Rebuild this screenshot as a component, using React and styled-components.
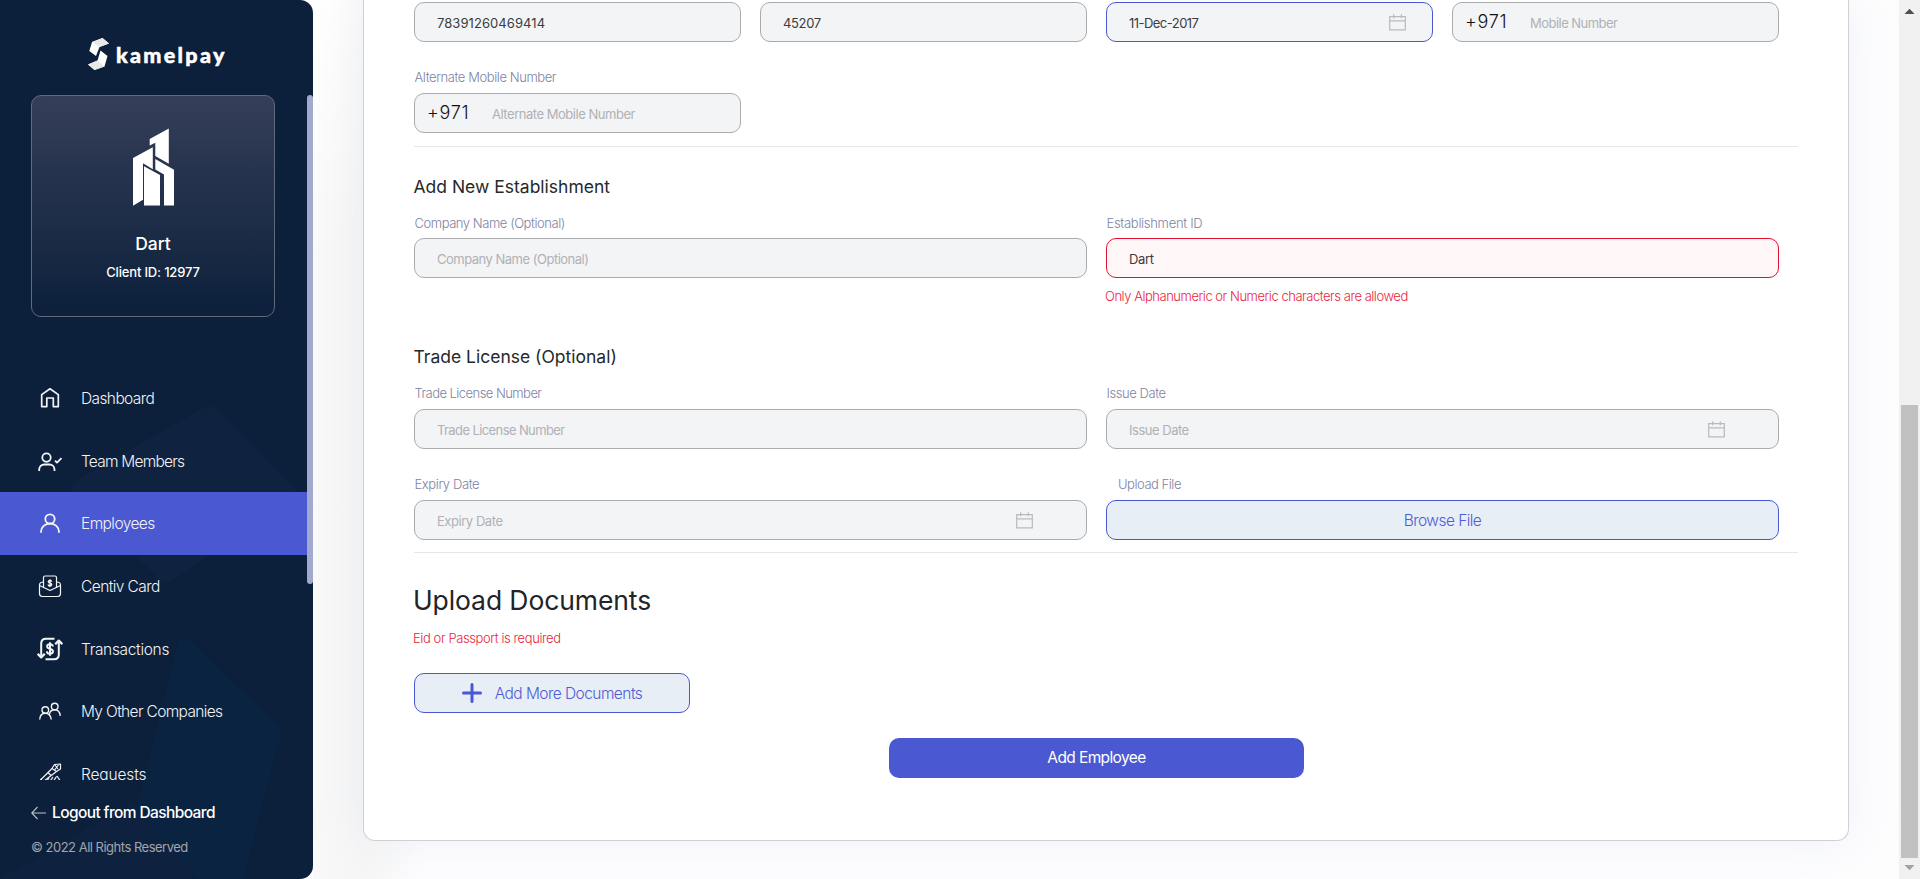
import React from "react";
import styled, { createGlobalStyle } from "styled-components";

const GlobalStyle = createGlobalStyle`
  * { box-sizing: border-box; }
  body {
    margin: 0;
    overflow: hidden;
    font-family: Inter, "Liberation Sans", sans-serif;
    background: #fcfdfd;
  }
`;

const Page = styled.div`
  display: flex;
  height: 879px;
  overflow: hidden;
`;

/* ---------- Sidebar ---------- */

const Sidebar = styled.aside`
  position: relative;
  z-index: 1;
  flex: none;
  width: 313px;
  height: 879px;
  background: #0c203b;
  border-radius: 0 13px 13px 0;
  overflow: hidden;
  display: flex;
  flex-direction: column;
  color: #fff;
`;

const Backdrop = styled.svg`
  position: absolute;
  inset: 0;
  z-index: -1;
`;

const Brand = styled.div`
  height: 95px;
  padding: 37px 0 0 87px;
  display: flex;
  align-items: flex-start;
  gap: 6px;
`;

const BrandName = styled.span`
  font: 900 21.5px/36px Lato, "Open Sans", sans-serif;
  letter-spacing: ${(p) => p.$ls}px;
  -webkit-text-stroke: 0.5px #fff;
`;

const ScrollArea = styled.div`
  display: flex;
  height: 685px;
  overflow: hidden;
`;

const ScrollContent = styled.div`
  width: 307px;
`;

const ScrollThumb = styled.div`
  width: 6px;
  height: 489px;
  border-radius: 3px;
  background: #a3a8ce;
`;

const ClientCard = styled.div`
  width: 244px;
  height: 222px;
  margin-left: 31px;
  border: 1px solid #5f6a7d;
  border-radius: 10px;
  background: linear-gradient(#353e58, #0c203b);
  display: flex;
  flex-direction: column;
  align-items: center;
  padding-top: 32px;
`;

const ClientName = styled.div`
  margin-top: 25px;
  font-size: 17.5px;
  font-weight: 500;
  line-height: 26px;
`;

const ClientId = styled.div`
  margin-top: 5px;
  font-size: 13px;
  font-weight: 500;
  line-height: 20px;
  letter-spacing: -0.17px;
`;

const Menu = styled.nav`
  margin-top: 50px;
`;

const MenuItem = styled.div`
  height: 62.6px;
  display: flex;
  align-items: center;
  padding-left: 37px;
  gap: 18px;
  background: ${(p) => (p.$active ? "#4a58d1" : "transparent")};
`;

const MenuLabel = styled.span`
  padding-top: 2px;
  font-size: 15.5px;
  font-weight: 350;
  line-height: 22px;
  color: #f2f3f6;
  letter-spacing: ${(p) => p.$ls + 0.05}px;
  white-space: nowrap;
`;

const Logout = styled.div`
  display: flex;
  align-items: center;
  gap: 6px;
  margin: 22px 0 0 31px;
  font-size: 15.5px;
  font-weight: 500;
  line-height: 22px;
  letter-spacing: -0.6px;
`;

const Copyright = styled.div`
  margin: 13px 0 0 31px;
  font-size: 13px;
  line-height: 20px;
  color: #a2a6ab;
  letter-spacing: -0.5px;
`;

/* ---------- Form ---------- */

const Main = styled.main`
  flex: 1;
  padding-left: 50px;
  background:
    radial-gradient(90px 260px at 0 0, #ffffff, rgba(255, 255, 255, 0)),
    linear-gradient(90deg, #f9f9f9, #f6f6f6 50px, #fdfdfe 110px);
`;

const FormCard = styled.section`
  width: 1486px;
  height: 841px;
  padding: 2px 50px 0;
  background: #fff;
  border: 1px solid #cfd0d2;
  border-top: 0;
  border-radius: 0 0 12px 12px;
  box-shadow: 0 0 50px rgba(200, 206, 228, 0.25);
`;

const FieldGrid = styled.div`
  display: grid;
  grid-template-columns: repeat(${(p) => p.$cols}, 1fr);
  column-gap: 19px;
  width: 1365px;
`;

const FieldLabel = styled.div`
  height: ${(p) => p.$h || 27}px;
  padding-left: ${(p) => p.$indent || 0.5}px;
  font-size: 13px;
  font-weight: 350;
  line-height: 20px;
  color: #8083a4;
  letter-spacing: ${(p) => p.$ls + 0.05}px;
`;

const boxColors = {
  normal: ["#aaabad", "#f3f4f6"],
  focus: ["#4a58d1", "#f3f4f6"],
  error: ["#e2112f", "#fff6f7"],
};

const InputBox = styled.div`
  height: 40px;
  display: flex;
  align-items: center;
  padding: 0 ${(p) => p.$right || 22}px 0 ${(p) => (p.$phone ? 12 : 22)}px;
  border: 1px solid ${(p) => boxColors[p.$tone || "normal"][0]};
  background: ${(p) => boxColors[p.$tone || "normal"][1]};
  border-radius: 10px;
`;

const Value = styled.span`
  flex: 1;
  padding-top: ${(p) => (p.$placeholder ? 2 : 1)}px;
  font-size: 13px;
  line-height: 20px;
  color: ${(p) => (p.$placeholder ? "#b0b1b4" : "#3b3c40")};
  letter-spacing: ${(p) => p.$ls}px;
  white-space: nowrap;
`;

const DialCode = styled.span`
  width: 65px;
  font-size: 18px;
  font-weight: 300;
  line-height: 24px;
  color: #111;
  letter-spacing: 0.75px;
`;

const ErrorText = styled.div`
  margin-left: -1px;
  font-size: 13px;
  font-weight: 350;
  line-height: 20px;
  color: #ea2440;
  letter-spacing: ${(p) => p.$ls + 0.05}px;
`;

const Divider = styled.div`
  width: 1384px;
  height: 1px;
  background: #e6e7e8;
`;

const SectionTitle = styled.h3`
  margin: 0 0 0 -0.5px;
  font-size: 17.5px;
  font-weight: 400;
  line-height: 24px;
  color: #26282b;
`;

const PageTitle = styled.h2`
  margin: 0 0 0 -1px;
  font-size: 26.5px;
  font-weight: 400;
  line-height: 36px;
  letter-spacing: -0.1px;
  color: #222427;
`;

const OutlineButton = styled.div`
  height: 40px;
  width: ${(p) => p.$w || "100%"};
  display: flex;
  align-items: center;
  justify-content: center;
  gap: 13px;
  border: 1px solid #4a58d1;
  border-radius: 10px;
  background: #e7eef5;
  color: #4f5cd4;
  font-size: 15.5px;
  font-weight: 350;
  letter-spacing: -0.55px;
`;

const PrimaryButton = styled.div`
  width: 415px;
  height: 40px;
  margin: 25px 0 0 475px;
  border-radius: 10px;
  background: #4a58d1;
  color: #fff;
  text-align: center;
  font-size: 15.5px;
  line-height: 40px;
  letter-spacing: -0.61px;
`;

const Space = styled.div`
  height: ${(p) => p.$h}px;
`;

/* ---------- Window scrollbar ---------- */

const WindowScrollbar = styled.div`
  flex: none;
  width: 21px;
  background: #f1f1f1;
  display: flex;
  flex-direction: column;
  align-items: center;
`;

const WindowThumb = styled.div`
  flex: none;
  width: 17px;
  height: 453px;
  margin: 388px 0 2px;
  background: #c1c1c1;
`;

/* ---------- Drawings ---------- */

function BackShapes() {
  return (
    <Backdrop width="313" height="879" viewBox="0 0 313 879">
      <path d="M205 407q7-3 12 2l77 78q7 9-3 13l-118 80q-8 5-15-2l-82-80q-8-12 4-20z" fill="#0f2340" />
      <path d="M0 879 130 803 200 860 190 879z" fill="#0e2240" />
      <path d="M178 642q4-10 14 0l85 84q4 5 3 12l-37 141h-45l-58-64q-3-6-1-14z" fill="#0a2341" />
    </Backdrop>
  );
}

function BrandMark() {
  return (
    <svg width="23" height="34" viewBox="0 0 23 34">
      <path d="M5 5 15.5 1 22 6.5 12.5 10 9 19 2.3 14z" fill="#fff" />
      <path d="M5 5 15.5 1 22 6.5 12.5 10z" fill="#e9e9e9" />
      <path d="M13.5 13.5 20.5 19 17.5 29.5 7.5 33 1 27.5 10.5 23.5z" fill="#fff" />
      <path d="M1 27.5 10.5 23.5 17.5 29.5 7.5 33z" fill="#e9e9e9" />
    </svg>
  );
}

function Building() {
  return (
    <svg width="42" height="78" viewBox="132 127.5 42 78" fill="#fff">
      <path d="M149.7 138.5 168.8 128v35.2l-13.5-7.8v-13.2l-5.6 2.8z" />
      <path d="M133 157.5 152.8 146.8v22l-9.8-6v36.5l-10 6z" />
      <path d="M144 165.8 160 174.5v30.4h-16z" />
      <path d="M155.3 158.6 174 169.3v35.6h-10v-30.8l-8.7-5z" />
    </svg>
  );
}

const dollar = "M14.6 9.6c0-1.4-1.2-2-2.6-2s-2.6.7-2.6 2.1c0 3 5.3 1.4 5.3 4.3 0 1.5-1.3 2.2-2.7 2.2s-2.8-.8-2.8-2.3M12 5.8v12.2";

const icons = {
  home: <path d="M3.7 8.6 12 2.8l8.3 5.8v12h-5V12H8.8v8.6H3.7z" strokeWidth="1.7" />,
  team: (
    <g strokeWidth="1.8">
      <circle cx="8.5" cy="8.6" r="4.2" />
      <path d="M1.2 22v-1.5a5 5 0 0 1 5-5h5.3a5 5 0 0 1 5 5V22M17 11.6l2 2 4.5-4.5" />
    </g>
  ),
  user: (
    <g strokeWidth="1.8">
      <circle cx="12" cy="8" r="4.7" />
      <path d="M3 21.8v-1a9 8.300 0 0 1 18 0v1" />
    </g>
  ),
  card: (
    <g strokeWidth="1.2">
      <path d="M5.5 13.2V3.5q0-1.500 1.500-1.500h10q1.500 0 1.500 1.500v9.700" />
      <path d="M5.500 8Q1.500 8 1.500 11v8.500q0 3 3 3h15q3 0 3-3V11q0-3-4-3" />
      <path d="M1.500 11.500 12 16.500l10.500-5" />
      <path d={dollar} transform="translate(4.300 1.600) scale(.64)" strokeWidth="2.200" />
    </g>
  ),
  transfer: (
    <g strokeWidth="2">
      <path d="M16.500 1.800H8q-4.800 0-4.800 4.800v12.200M7.500 22.200H16q4.800 0 4.800-4.800V5" />
      <path d="M-.4 16.800 3.200 20.400l3.600-3.600M17.200 7.200l3.600-3.600 3.600 3.600" strokeWidth="2.300" />
      <path d={dollar} strokeWidth="1.800" transform="translate(-1.200 -1.100) scale(1.100)" />
    </g>
  ),
  group: (
    <g strokeWidth="1.400">
      <circle cx="7.300" cy="11" r="3.300" />
      <path d="M1.700 20.500q.4-6.200 5.600-6.200t6 6.200" />
      <circle cx="16.700" cy="7.500" r="3.300" />
      <path d="M11.500 15q.7-4.200 5.200-4.200 4.800 0 5.600 6" />
    </g>
  ),
  requests: (
    <g strokeWidth="1.200">
      <path d="M2 18.500 14 6.500l2.500-4 6-.5v5l-4 2.500L6 19" />
      <path d="M14 6.500l4.500 3M17 3l3 4M20.500 3l-4 5M10 10.500l3 3" />
      <path d="M1.500 19.500h21M1.500 21.500l2-5M8 20l3-4M11 20.500l4-5.500M14.500 20.500l4-6M19 14l3 4.500-2 2" />
    </g>
  ),
};

function MenuIcon({ name }) {
  return (
    <svg width="26" height="26" viewBox="-1 -1 26 26" fill="none" stroke="#f4f5f7" strokeLinejoin="round">
      {icons[name]}
    </svg>
  );
}

function ArrowLeft() {
  return (
    <svg width="15" height="14" viewBox="0 0 15 14" fill="none" stroke="#b9bfc8" strokeWidth="1.100">
      <path d="M15 7H1M6.500 1 .8 7l5.700 6" />
    </svg>
  );
}

function Calendar() {
  return (
    <svg width="17" height="17" viewBox="0 0 17 17" fill="none" stroke="#b9babc" strokeWidth="1.200">
      <path d="M.7 2.700h15.600v13.200H.7zM.7 6.800h15.600M4.700.2v4M12.300.2v4" />
    </svg>
  );
}

function Plus() {
  return (
    <svg width="20" height="20" viewBox="0 0 20 20" stroke="#4a58d1" strokeWidth="3" strokeLinecap="round">
      <path d="M10 1.500v17M1.500 10h17" />
    </svg>
  );
}

function ScrollArrow({ up }) {
  return (
    <svg width="21" height="17" viewBox="0 0 21 17" fill={up ? "#505050" : "#a3a3a3"}>
      <path d={up ? "M5.500 14h10l-5-5.200z" : "M5.500 5h10l-5 5.200z"} />
    </svg>
  );
}

const menu = [
  ["home", "Dashboard", -0.65],
  ["team", "Team Members", -0.83],
  ["user", "Employees", -0.63],
  ["card", "Centiv Card", -0.62],
  ["transfer", "Transactions", -0.37],
  ["group", "My Other Companies", -0.7],
  ["requests", "Requests", -0.2],
];

export default function App() {
  return (
    <Page>
      <GlobalStyle />
      <Sidebar>
        <BackShapes />
        <Brand>
          <BrandMark />
          <BrandName $ls={2.3}>kamelpay</BrandName>
        </Brand>
        <ScrollArea>
          <ScrollContent>
            <ClientCard>
              <Building />
              <ClientName>Dart</ClientName>
              <ClientId>Client ID: 12977</ClientId>
            </ClientCard>
            <Menu>
              {menu.map(([icon, label, ls]) => (
                <MenuItem key={label} $active={label === "Employees"}>
                  <MenuIcon name={icon} />
                  <MenuLabel $ls={ls}>{label}</MenuLabel>
                </MenuItem>
              ))}
            </Menu>
          </ScrollContent>
          <ScrollThumb />
        </ScrollArea>
        <Logout>
          <ArrowLeft />
          Logout from Dashboard
        </Logout>
        <Copyright>© 2022 All Rights Reserved</Copyright>
      </Sidebar>

      <Main>
        <FormCard>
          <FieldGrid $cols={4}>
            <InputBox>
              <Value $ls={0.07}>78391260469414</Value>
            </InputBox>
            <InputBox>
              <Value $ls={-0.35}>45207</Value>
            </InputBox>
            <InputBox $tone="focus" $right={26}>
              <Value $ls={-0.53}>11-Dec-2017</Value>
              <Calendar />
            </InputBox>
            <InputBox $phone>
              <DialCode>+971</DialCode>
              <Value $placeholder $ls={-0.53}>Mobile Number</Value>
            </InputBox>
          </FieldGrid>
          <Space $h={25} />
          <FieldGrid $cols={4}>
            <div>
              <FieldLabel $h={26} $ls={-0.47}>Alternate Mobile Number</FieldLabel>
              <InputBox $phone>
                <DialCode>+971</DialCode>
                <Value $placeholder $ls={-0.47}>Alternate Mobile Number</Value>
              </InputBox>
            </div>
          </FieldGrid>
          <Space $h={13} />
          <Divider />
          <Space $h={28} />
          <SectionTitle>Add New Establishment</SectionTitle>
          <Space $h={14} />
          <FieldGrid $cols={2}>
            <div>
              <FieldLabel $h={25} $ls={-0.5}>Company Name (Optional)</FieldLabel>
              <InputBox>
                <Value $placeholder $ls={-0.5}>Company Name (Optional)</Value>
              </InputBox>
            </div>
            <div>
              <FieldLabel $h={25} $ls={-0.35}>Establishment ID</FieldLabel>
              <InputBox $tone="error">
                <Value $ls={-0.35}>Dart</Value>
              </InputBox>
              <Space $h={8} />
              <ErrorText $ls={-0.52}>Only Alphanumeric or Numeric characters are allowed</ErrorText>
            </div>
          </FieldGrid>
          <Space $h={39} />
          <SectionTitle>Trade License (Optional)</SectionTitle>
          <Space $h={14} />
          <FieldGrid $cols={2}>
            <div>
              <FieldLabel $h={26} $ls={-0.6}>Trade License Number</FieldLabel>
              <InputBox>
                <Value $placeholder $ls={-0.6}>Trade License Number</Value>
              </InputBox>
            </div>
            <div>
              <FieldLabel $h={26} $ls={-0.48}>Issue Date</FieldLabel>
              <InputBox $right={53}>
                <Value $placeholder $ls={-0.48}>Issue Date</Value>
                <Calendar />
              </InputBox>
            </div>
          </FieldGrid>
          <Space $h={25} />
          <FieldGrid $cols={2}>
            <div>
              <FieldLabel $h={26} $ls={-0.45}>Expiry Date</FieldLabel>
              <InputBox $right={53}>
                <Value $placeholder $ls={-0.45}>Expiry Date</Value>
                <Calendar />
              </InputBox>
            </div>
            <div>
              <FieldLabel $h={26} $indent={12} $ls={-0.52}>Upload File</FieldLabel>
              <OutlineButton>Browse File</OutlineButton>
            </div>
          </FieldGrid>
          <Space $h={12} />
          <Divider />
          <Space $h={29} />
          <PageTitle>Upload Documents</PageTitle>
          <Space $h={10} />
          <ErrorText $ls={-0.46}>Eid or Passport is required</ErrorText>
          <Space $h={25} />
          <OutlineButton $w="276px">
            <Plus />
            Add More Documents
          </OutlineButton>
          <PrimaryButton>Add Employee</PrimaryButton>
        </FormCard>
      </Main>

      <WindowScrollbar>
        <ScrollArrow up />
        <WindowThumb />
        <ScrollArrow />
      </WindowScrollbar>
    </Page>
  );
}
